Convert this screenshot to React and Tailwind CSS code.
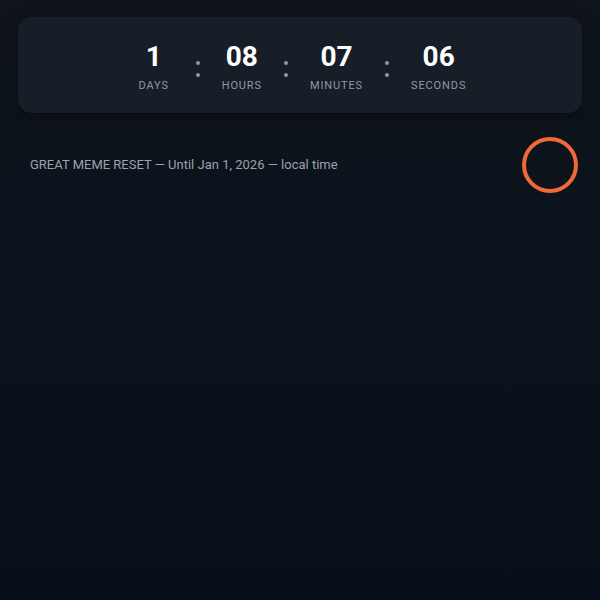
import React from "react";

const units = [
  { value: "1", label: "Days" },
  { value: "08", label: "Hours" },
  { value: "07", label: "Minutes" },
  { value: "06", label: "Seconds" },
];

const Colon = () => (
  <div className="flex flex-col gap-2 mt-[5px]">
    <span className="w-1 h-1 rounded-full bg-[#8f98a6]" />
    <span className="w-1 h-1 rounded-full bg-[#8f98a6]" />
  </div>
);

const App = () => {
  return (
    <div
      className="min-h-[600px] w-full bg-gradient-to-b from-[#0f141c] to-[#07101a] p-[18px] pt-[17px]"
      style={{ fontFamily: "Roboto, 'Noto Sans', sans-serif" }}
    >
      {/* Countdown card */}
      <div className="h-[96px] pt-[3px] rounded-[14px] bg-[#181e27] shadow-[0_4px_16px_rgba(0,0,0,0.35)] flex items-center justify-center gap-[10px]">
        {units.map((u, i) => (
          <React.Fragment key={u.label}>
            {i > 0 && <Colon />}
            <div className="min-w-16 px-3 flex flex-col items-center">
              <span className="text-[28px] leading-[34px] font-bold text-white">
                {u.value}
              </span>
              <span className="mt-1 text-[11px] leading-4 uppercase tracking-[0.08em] text-[#8f98a6]">
                {u.label}
              </span>
            </div>
          </React.Fragment>
        ))}
      </div>

      {/* Footer row */}
      <div className="mt-6 pl-3 pr-1 flex items-center justify-between">
        <p className="text-[13px] text-[#9aa3ae]">
          GREAT MEME RESET — Until Jan 1, 2026 — local time
        </p>
        <div className="w-14 h-14 rounded-full border-4 border-[#f06a38]" />
      </div>
    </div>
  );
};

export default App;
